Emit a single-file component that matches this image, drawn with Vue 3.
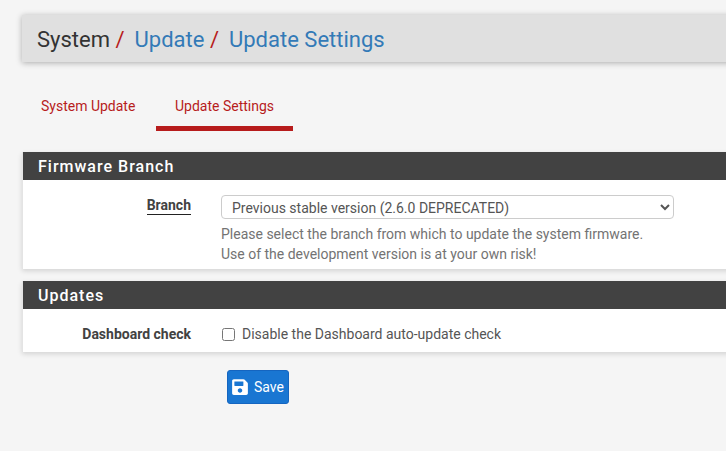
<script setup>
import { ref } from 'vue'

const branch = ref('previous')
const disableCheck = ref(false)
</script>

<template>
  <div class="page">
    <div class="bar">
      <h1>
        <span>System</span><span class="sep">/</span>
        <a href="#">Update</a><span class="sep">/</span>
        <a href="#">Update Settings</a>
      </h1>
    </div>

    <ul class="tabs">
      <li><a href="#">System Update</a></li>
      <li class="active"><a href="#">Update Settings</a></li>
    </ul>

    <div class="panel">
      <h2>Firmware Branch</h2>
      <div class="row branch-row">
        <label class="label"><span class="underlined">Branch</span></label>
        <div class="field">
          <select v-model="branch">
            <option value="latest">Latest stable version (2.7.x)</option>
            <option value="previous">Previous stable version (2.6.0 DEPRECATED)</option>
          </select>
          <p class="help">
            Please select the branch from which to update the system firmware.<br />
            Use of the development version is at your own risk!
          </p>
        </div>
      </div>
    </div>

    <div class="panel">
      <h2>Updates</h2>
      <div class="row check-row">
        <label class="label">Dashboard check</label>
        <label class="check">
          <input type="checkbox" v-model="disableCheck" />
          Disable the Dashboard auto-update check
        </label>
      </div>
    </div>

    <div class="actions">
      <button type="button" class="save">
        <svg viewBox="0 0 448 512" width="16" height="18" fill="currentColor">
          <path d="M433.941 129.941l-83.882-83.882A48 48 0 0 0 316.118 32H48C21.49 32 0 53.49 0 80v352c0 26.51 21.49 48 48 48h352c26.51 0 48-21.49 48-48V163.882a48 48 0 0 0-14.059-33.941zM224 416c-35.346 0-64-28.654-64-64 0-35.346 28.654-64 64-64s64 28.654 64 64c0 35.346-28.654 64-64 64zm96-304.52V212c0 6.627-5.373 12-12 12H76c-6.627 0-12-5.373-12-12V108c0-6.627 5.373-12 12-12h228.52c3.183 0 6.235 1.264 8.485 3.515l3.48 3.48A11.996 11.996 0 0 1 320 111.48z" />
        </svg>
        Save
      </button>
    </div>
  </div>
</template>

<style>
html,
body {
  margin: 0;
  background: #f5f5f5;
  overflow: hidden;
}
</style>

<style scoped>
.page {
  height: 451px;
  padding: 15px 0 0 22px;
  box-sizing: border-box;
  overflow: hidden;
  background: #f5f5f5;
  font-family: Roboto, "Liberation Sans", sans-serif;
  font-size: 14px;
  color: #424242;
}
a {
  text-decoration: none;
}
.bar {
  height: 47px;
  margin-right: -30px;
  padding-left: 15px;
  display: flex;
  align-items: center;
  background: #e0e0e0;
  box-shadow: 0 1px 6px rgba(0, 0, 0, 0.3);
}
h1 {
  margin: 0;
  padding-top: 1px;
  font-size: 22px;
  font-weight: 400;
  color: #333;
}
h1 a {
  color: #337ab7;
}
.sep {
  color: #b71c1c;
  margin: 0 10px 0 5.5px;
}
.tabs {
  display: flex;
  list-style: none;
  margin: 20px 0 0;
  padding: 0;
  height: 49px;
}
.tabs li {
  width: 137px;
  margin-right: -3px;
  box-sizing: border-box;
  text-align: center;
  line-height: 48px;
}
.tabs a {
  color: #b71c1c;
}
.tabs li:first-child {
  width: 134px;
  margin-right: 0;
  text-align: left;
  padding-left: 19px;
}
.tabs .active {
  border-bottom: 5px solid #b71c1c;
}
.panel {
  margin: 21px -30px 0 0;
  background: #fff;
  border-left: 1px solid #e4e4e4;
  box-shadow: 0 2px 5px rgba(0, 0, 0, 0.14);
}
.panel + .panel {
  margin-top: 12px;
}
h2 {
  margin: 0;
  height: 28px;
  padding-left: 15px;
  background: #424242;
  color: #fff;
  font-size: 16px;
  font-weight: 500;
  line-height: 29px;
  letter-spacing: 1px;
}
.row {
  display: grid;
  grid-template-columns: 168px 1fr;
  column-gap: 30px;
}
.branch-row {
  height: 89px;
  padding-top: 15px;
  box-sizing: border-box;
}
.check-row {
  height: 43px;
  padding-top: 17px;
  box-sizing: border-box;
  align-items: start;
}
.label {
  padding-top: 2px;
  font-weight: 700;
  text-align: right;
}
.check-row .label {
  padding-top: 0;
}
.underlined {
  border-bottom: 1px solid #222;
  padding-bottom: 1px;
}
select {
  display: block;
  width: 453px;
  height: 24px;
  padding: 1px 0 0 6px;
  border: 1px solid #ccc;
  border-radius: 4px;
  background: #fff;
  color: #555;
  font: inherit;
}
.help {
  margin: 5px 0 0;
  color: #737373;
  line-height: 20px;
}
.check {
  display: flex;
  align-items: center;
  color: #555;
}
.check input {
  width: 13px;
  height: 13px;
  margin: 0 7px 0 1px;
}
.actions {
  margin: 18px 0 0 205px;
}
.save {
  display: flex;
  align-items: center;
  gap: 6px;
  width: 62px;
  height: 34px;
  padding: 0 0 0 4px;
  border: 1px solid #1565c0;
  border-radius: 3px;
  background: #1976d2;
  color: #fff;
  font: inherit;
}
</style>
